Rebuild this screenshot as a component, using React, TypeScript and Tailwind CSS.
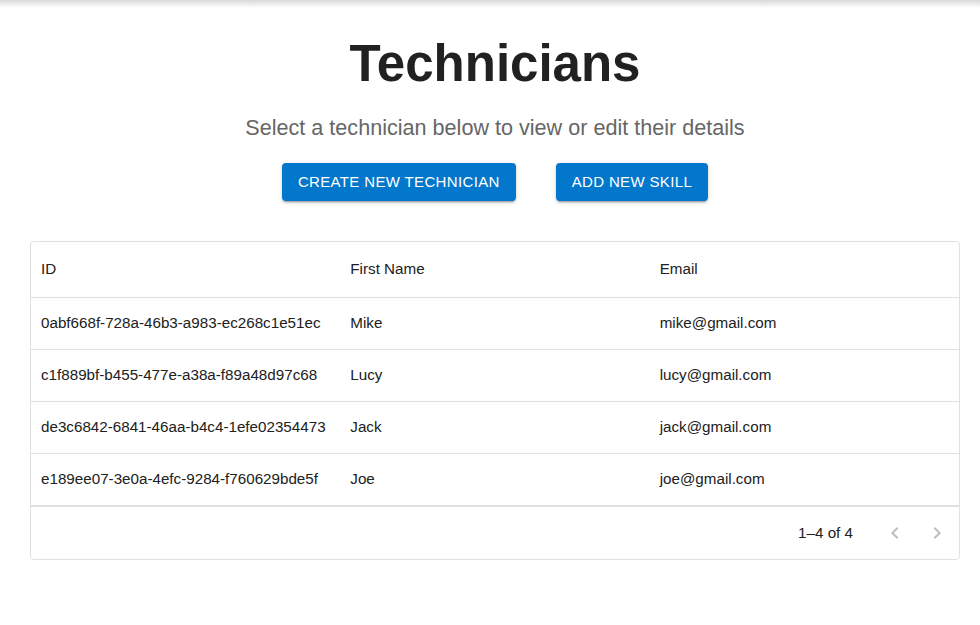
import { useState } from "react";

const technicians = [
    { id: "0abf668f-728a-46b3-a983-ec268c1e51ec", firstName: "Mike", email: "mike@gmail.com" },
    { id: "c1f889bf-b455-477e-a38a-f89a48d97c68", firstName: "Lucy", email: "lucy@gmail.com" },
    { id: "de3c6842-6841-46aa-b4c4-1efe02354473", firstName: "Jack", email: "jack@gmail.com" },
    { id: "e189ee07-3e0a-4efc-9284-f760629bde5f", firstName: "Joe", email: "joe@gmail.com" },
];

function ArrowIcon({ dir }: { dir: "left" | "right" }) {
    const d = dir === "left"
        ? "M15.41 16.59L10.83 12l4.58-4.59L14 6l-6 6 6 6 1.41-1.41z"
        : "M8.59 16.59L13.17 12 8.59 7.41 10 6l6 6-6 6-1.41-1.41z";
    return (
        <svg viewBox="0 0 24 24" className="w-6 h-6" fill="rgba(0,0,0,0.26)">
            <path d={d} />
        </svg>
    );
}

export default function App() {
    const [selected, setSelected] = useState<string | null>(null);

    return (
        <div className="w-full min-h-screen bg-white text-[#212121] font-['Liberation_Sans',Arial,sans-serif]">
            <div className="h-2 bg-gradient-to-b from-black/15 to-transparent" />
            <div className="flex flex-col items-center pl-[30px] pr-[20px]">
                <h1 className="mt-[26px] text-[51px] leading-[60px] font-bold text-[#212121]">
                    Technicians
                </h1>
                <p className="mt-[18px] text-[21.6px] leading-[32px] text-[#666666]">
                    Select a technician below to view or edit their details
                </p>
                <div className="mt-[19px] flex gap-10">
                    <button className="h-[38px] px-4 rounded bg-[#0277cc] text-white text-[15px] tracking-[0.35px] uppercase shadow-[0_3px_1px_-2px_rgba(0,0,0,0.2),0_2px_2px_0_rgba(0,0,0,0.14),0_1px_5px_0_rgba(0,0,0,0.12)]">
                        Create New Technician
                    </button>
                    <button className="h-[38px] px-4 rounded bg-[#0277cc] text-white text-[15px] tracking-[0.35px] uppercase shadow-[0_3px_1px_-2px_rgba(0,0,0,0.2),0_2px_2px_0_rgba(0,0,0,0.14),0_1px_5px_0_rgba(0,0,0,0.12)]">
                        Add New Skill
                    </button>
                </div>

                <div className="mt-10 w-full border border-[#e0e0e0] rounded text-[15.2px] text-[#212121]">
                    <div className="grid grid-cols-3 h-[56px] items-center border-b border-[#e0e0e0]">
                        <div className="px-[10px]">ID</div>
                        <div className="px-[10px]">First Name</div>
                        <div className="px-[10px]">Email</div>
                    </div>
                    {technicians.map((t) => (
                        <div
                            key={t.id}
                            onClick={() => setSelected(t.id)}
                            className={`grid grid-cols-3 h-[52px] items-center border-b border-[#e0e0e0] cursor-pointer ${selected === t.id ? "bg-[#e3eef8]" : ""}`}
                        >
                            <div className="px-[10px]">{t.id}</div>
                            <div className="px-[10px]">{t.firstName}</div>
                            <div className="px-[10px]">{t.email}</div>
                        </div>
                    ))}
                    <div className="flex justify-end items-center h-[53px] border-t border-[#e0e0e0] pr-[2px]">
                        <span className="mr-[22px]">1–4 of 4</span>
                        <div className="flex gap-[2px]">
                            <button className="w-10 h-10 flex items-center justify-center" disabled>
                                <ArrowIcon dir="left" />
                            </button>
                            <button className="w-10 h-10 flex items-center justify-center" disabled>
                                <ArrowIcon dir="right" />
                            </button>
                        </div>
                    </div>
                </div>
            </div>
        </div>
    );
}
